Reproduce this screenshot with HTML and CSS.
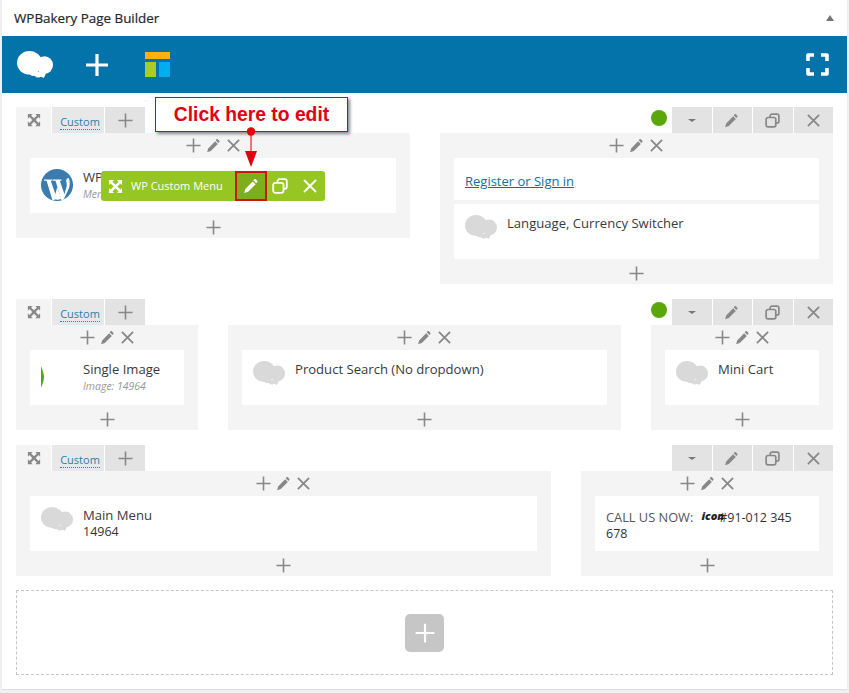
FILE: index.html
```html
<!DOCTYPE html>
<html lang="en">
<head>
<meta charset="utf-8">
<title>WPBakery Page Builder</title>
<link rel="stylesheet" href="styles.css">
</head>
<body>
<svg class="defs" width="0" height="0" aria-hidden="true">
  <symbol id="i-plus" viewBox="0 0 16 16"><path d="M8 .5v15M.5 8h15" fill="none" stroke="currentColor" stroke-width="1.700"/></symbol>
  <symbol id="i-x" viewBox="0 0 16 16"><path d="M2 2l12 12M14 2L2 14" fill="none" stroke="currentColor" stroke-width="1.900"/></symbol>
  <symbol id="i-pen" viewBox="0 0 16 16"><path d="M11.300 1.300c.4-.4 1-.4 1.400 0l1.500 1.500c.4.400.4 1 0 1.400l-1 1-2.900-2.900z" fill="currentColor"/><path d="M9.700 3.400l2.900 2.900-7.500 7.500-3.900 1.300 1.100-4z" fill="currentColor"/></symbol>
  <symbol id="i-copy" viewBox="0 0 16 16"><path d="M5.500 4V3.200a2 2 0 0 1 2-2h5.300a2 2 0 0 1 2 2v5.600a2 2 0 0 1-2 2h-1.300M3.200 4.800h6.300a2 2 0 0 1 2 2v6a2 2 0 0 1-2 2H3.200a2 2 0 0 1-2-2v-6a2 2 0 0 1 2-2z" fill="none" stroke="currentColor" stroke-width="1.800"/></symbol>
  <symbol id="i-expand" viewBox="0 0 16 16"><path d="M1 1h5.500L4.700 2.800 8 6.100l3.300-3.300L9.500 1H15v5.500l-1.800-1.800L9.900 8l3.300 3.300 1.800-1.800V15H9.500l1.800-1.800L8 9.900l-3.300 3.300L6.500 15H1V9.500l1.800 1.800L6.100 8 2.800 4.700 1 6.500z" fill="currentColor"/></symbol>
  <symbol id="i-cloud" viewBox="0 0 36 27"><ellipse cx="12.500" cy="11.800" rx="12.500" ry="11.800" fill="currentColor"/><ellipse cx="27.500" cy="14" rx="8.500" ry="8.800" fill="currentColor"/><path d="M11 21h18l-.8 3.500-1.600 2.500-2.400-1.300-2.200.8-3.300-.300-.4-1.200-3.800-.3-1.300-1z" fill="currentColor"/></symbol>
</svg>

<main class="panel">
  <header class="panel-head">
    <h2 class="panel-title">WPBakery Page Builder</h2>
    <span class="caret-up"></span>
  </header>

  <nav class="toolbar">
    <svg class="tb-logo"><use href="#i-cloud"/></svg>
    <svg class="tb-plus" viewBox="0 0 22 22"><path d="M11 0v22M0 11h22" fill="none" stroke="currentColor" stroke-width="3.200"/></svg>
    <div class="tb-layout"><span class="tb-o"></span><span class="tb-g"></span><span class="tb-b"></span></div>
    <svg class="tb-full" viewBox="0 0 23 23"><path d="M2 8V2h6M15 2h6v6M21 15v6h-6M8 21H2v-6" fill="none" stroke="currentColor" stroke-width="3.600" stroke-linejoin="round"/></svg>
  </nav>

  <div class="rows">
    <section class="row">
      <div class="row-bar">
        <span class="tab tab-move"><svg class="ic-14"><use href="#i-expand"/></svg></span>
        <span class="tab tab-custom"><a class="custom-link">Custom</a></span>
        <span class="tab tab-add"><svg class="ic-15"><use href="#i-plus"/></svg></span>
        <span class="bar-space"></span>
        <span class="status-dot"></span>
        <span class="act"><span class="caret-down"></span></span>
        <span class="act"><svg class="ic-15 ic-shift"><use href="#i-pen"/></svg></span>
        <span class="act"><svg class="ic-15"><use href="#i-copy"/></svg></span>
        <span class="act"><svg class="ic-15"><use href="#i-x"/></svg></span>
      </div>
      <div class="cols cols-66">
        <div class="col">
          <div class="col-ctl"><svg class="ic-15"><use href="#i-plus"/></svg><svg class="ic-15"><use href="#i-pen"/></svg><svg class="ic-15"><use href="#i-x"/></svg></div>
          <div class="card">
            <svg class="wp-logo" viewBox="0 0 32 32"><circle cx="16" cy="16" r="16" fill="#3a7cae"/><path d="M3 10.500h8.500v1.200H9.800L15 27l-2 4.500-1.500-.3L5.600 11.700H3z" fill="#fff"/><path d="M12 10.500h8.500v1.200h-1.700l5 14.500-2 5-1.500-.200-5.800-19.300H12z" fill="#fff"/><path d="M27.700 9c1.500 3.500 1.500 8-.5 12l-4.500 9.500-1-.3 3.500-11c1-3 .5-5 0-7-.3-1.500 1-3 2.500-3.200z" fill="#fff"/><path d="M16.200 18l4 11.500-.1.500c-2.300.8-4.800.9-7.100.2z" fill="#fff"/></svg>
            <div class="card-text"><div class="card-title">WP Custom Menu</div><div class="card-sub">Menu: Main</div></div>
          </div>
          <div class="col-add"><svg class="ic-15"><use href="#i-plus"/></svg></div>
        </div>
        <div class="col">
          <div class="col-ctl"><svg class="ic-15"><use href="#i-plus"/></svg><svg class="ic-15"><use href="#i-pen"/></svg><svg class="ic-15"><use href="#i-x"/></svg></div>
          <div class="card card-link"><a class="reg-link">Register or Sign in</a></div>
          <div class="card card-gap">
            <svg class="ph"><use href="#i-cloud"/></svg>
            <div class="card-text"><div class="card-title">Language, Currency Switcher</div></div>
          </div>
          <div class="col-add"><svg class="ic-15"><use href="#i-plus"/></svg></div>
        </div>
      </div>
    </section>

    <section class="row">
      <div class="row-bar">
        <span class="tab tab-move"><svg class="ic-14"><use href="#i-expand"/></svg></span>
        <span class="tab tab-custom"><a class="custom-link">Custom</a></span>
        <span class="tab tab-add"><svg class="ic-15"><use href="#i-plus"/></svg></span>
        <span class="bar-space"></span>
        <span class="status-dot"></span>
        <span class="act"><span class="caret-down"></span></span>
        <span class="act"><svg class="ic-15 ic-shift"><use href="#i-pen"/></svg></span>
        <span class="act"><svg class="ic-15"><use href="#i-copy"/></svg></span>
        <span class="act"><svg class="ic-15"><use href="#i-x"/></svg></span>
      </div>
      <div class="cols cols-363">
        <div class="col">
          <div class="col-ctl"><svg class="ic-15"><use href="#i-plus"/></svg><svg class="ic-15"><use href="#i-pen"/></svg><svg class="ic-15"><use href="#i-x"/></svg></div>
          <div class="card">
            <svg class="thumb" viewBox="0 0 32 32"><path d="M0 5c1 3 3 7 3 11s-2 8-3 11z" fill="#5aa312"/></svg>
            <div class="card-text"><div class="card-title">Single Image</div><div class="card-sub">Image: 14964</div></div>
          </div>
          <div class="col-add"><svg class="ic-15"><use href="#i-plus"/></svg></div>
        </div>
        <div class="col">
          <div class="col-ctl"><svg class="ic-15"><use href="#i-plus"/></svg><svg class="ic-15"><use href="#i-pen"/></svg><svg class="ic-15"><use href="#i-x"/></svg></div>
          <div class="card">
            <svg class="ph"><use href="#i-cloud"/></svg>
            <div class="card-text"><div class="card-title">Product Search (No dropdown)</div></div>
          </div>
          <div class="col-add"><svg class="ic-15"><use href="#i-plus"/></svg></div>
        </div>
        <div class="col">
          <div class="col-ctl"><svg class="ic-15"><use href="#i-plus"/></svg><svg class="ic-15"><use href="#i-pen"/></svg><svg class="ic-15"><use href="#i-x"/></svg></div>
          <div class="card">
            <svg class="ph"><use href="#i-cloud"/></svg>
            <div class="card-text"><div class="card-title">Mini Cart</div></div>
          </div>
          <div class="col-add"><svg class="ic-15"><use href="#i-plus"/></svg></div>
        </div>
      </div>
    </section>

    <section class="row">
      <div class="row-bar">
        <span class="tab tab-move"><svg class="ic-14"><use href="#i-expand"/></svg></span>
        <span class="tab tab-custom"><a class="custom-link">Custom</a></span>
        <span class="tab tab-add"><svg class="ic-15"><use href="#i-plus"/></svg></span>
        <span class="bar-space"></span>
        <span class="act"><span class="caret-down"></span></span>
        <span class="act"><svg class="ic-15 ic-shift"><use href="#i-pen"/></svg></span>
        <span class="act"><svg class="ic-15"><use href="#i-copy"/></svg></span>
        <span class="act"><svg class="ic-15"><use href="#i-x"/></svg></span>
      </div>
      <div class="cols cols-84">
        <div class="col">
          <div class="col-ctl"><svg class="ic-15"><use href="#i-plus"/></svg><svg class="ic-15"><use href="#i-pen"/></svg><svg class="ic-15"><use href="#i-x"/></svg></div>
          <div class="card">
            <svg class="ph"><use href="#i-cloud"/></svg>
            <div class="card-text"><div class="card-title">Main Menu</div><div class="card-line">14964</div></div>
          </div>
          <div class="col-add"><svg class="ic-15"><use href="#i-plus"/></svg></div>
        </div>
        <div class="col">
          <div class="col-ctl"><svg class="ic-15"><use href="#i-plus"/></svg><svg class="ic-15"><use href="#i-pen"/></svg><svg class="ic-15"><use href="#i-x"/></svg></div>
          <div class="card card-call">
            <p class="call-text"><span class="call-label">CALL US NOW:</span> <span class="call-icon">icon</span>#91-012 345 678</p>
          </div>
          <div class="col-add"><svg class="ic-15"><use href="#i-plus"/></svg></div>
        </div>
      </div>
    </section>

    <div class="add-zone"><span class="add-btn"><svg class="ic-20"><use href="#i-plus"/></svg></span></div>
  </div>

  <div class="green-bar">
    <svg class="gb-move"><use href="#i-expand"/></svg>
    <span class="gb-label">WP Custom Menu</span>
    <span class="gb-edit"><svg class="gb-ic"><use href="#i-pen"/></svg></span>
    <svg class="gb-ic gb-copy"><use href="#i-copy"/></svg>
    <svg class="gb-ic gb-x"><use href="#i-x"/></svg>
  </div>

  <div class="callout">Click here to edit</div>
  <svg class="callout-arrow" viewBox="0 0 16 44"><path d="M8 6v20" stroke="#f2474d" stroke-width="1.500"/><circle cx="8" cy="4.500" r="4.200" fill="#e3000f"/><path d="M2 24h12l-6 16z" fill="#e3000f"/></svg>
</main>
</body>
</html>
```
FILE: styles.css
```css
html, body {
  margin: 0;
  padding: 0;
  background: #f1f1f1;
}

body {
  font-family: "Open Sans", "Noto Sans", sans-serif;
  color: #444;
  font-size: 13px;
  height: 693px;
  overflow: hidden;
}

.defs {
  position: absolute;
}

.panel {
  position: relative;
  width: 845px;
  height: 689px;
  margin-left: 2px;
  background: #fff;
  box-shadow: 0 1px 1px rgba(0, 0, 0, .08);
}

.panel-head {
  height: 36px;
  display: flex;
  align-items: center;
  justify-content: space-between;
  padding: 0 13px 0 12px;
}

.panel-title {
  margin: 0;
  font-size: 13.400px;
  font-weight: 400;
  color: #23282d;
  -webkit-text-stroke: .2px #23282d;
}

.caret-up {
  width: 0;
  height: 0;
  border-left: 4.500px solid transparent;
  border-right: 4.500px solid transparent;
  border-bottom: 6px solid #72777c;
  margin-top: -1px;
}

.toolbar {
  height: 57px;
  background: #0473aa;
  display: flex;
  align-items: center;
  color: #fff;
  padding: 0 17px 0 15px;
}

.tb-logo {
  width: 36px;
  height: 27px;
  margin-top: -1px;
}

.tb-plus {
  width: 22px;
  height: 22px;
  margin-left: 33px;
}

.tb-layout {
  display: grid;
  grid-template-columns: 11px 11px;
  grid-template-rows: 7px 15px;
  column-gap: 3px;
  row-gap: 3px;
  margin-left: 37px;
}

.tb-o { grid-column: 1 / 3; background: #fcb214; }
.tb-g { background: #a8cb2d; }
.tb-b { background: #00aeef; }

.tb-full {
  width: 23px;
  height: 23px;
  margin-left: auto;
  margin-right: 1px;
}

.rows {
  padding: 14px 14px 14px;
}

.row {
  margin-bottom: 15px;
}

.row-bar {
  display: flex;
  height: 26px;
  color: #888;
}

.tab, .act {
  display: flex;
  align-items: center;
  justify-content: center;
  height: 26px;
}

.tab-move {
  width: 35px;
  background: #f4f4f4;
  margin-right: 1px;
}

.tab-custom {
  width: 52px;
  background: #e8e8e8;
  margin-right: 1px;
  padding-left: 4px;
  box-sizing: border-box;
}

.tab-add {
  width: 40px;
  background: #e3e3e3;
}

.bar-space {
  flex: 1;
}

.status-dot {
  width: 16px;
  height: 16px;
  border-radius: 50%;
  background: #5aa70a;
  margin: 3px 4px 0 0;
}

.act {
  width: 39.500px;
  background: #e3e3e3;
  margin-left: 1px;
}

.caret-down {
  width: 0;
  height: 0;
  border-left: 4px solid transparent;
  border-right: 4px solid transparent;
  border-top: 3px solid #777;
}

.custom-link {
  font-size: 11px;
  color: #2a7ea8;
  line-height: 14px;
  border-bottom: 1px dotted #2a7ea8;
  margin-top: 5px;
}

.ic-14 { width: 14px; height: 14px; }
.ic-15 { width: 15px; height: 15px; }
.ic-20 { width: 20px; height: 20px; }
.ic-shift { margin-right: 2px; }

.cols {
  display: grid;
  column-gap: 30px;
  align-items: start;
}

.cols-66  { grid-template-columns: 394px 393px; }
.cols-363 { grid-template-columns: 182px 393px 182px; }
.cols-84  { grid-template-columns: 535px 252px; }

.col {
  background: #f4f4f4;
  padding: 0 14px;
  color: #888;
}

.col-ctl, .col-add {
  height: 25px;
  display: flex;
  align-items: center;
  justify-content: center;
  gap: 5px;
}

.col-add {
  padding-top: 3px;
  box-sizing: border-box;
}

.card {
  background: #fff;
  height: 55px;
  display: flex;
  padding: 11px 11px 0;
  box-sizing: border-box;
  color: #444;
}

.card-link {
  height: 42px;
  padding-top: 15px;
}

.card-gap {
  margin-top: 4px;
}

.reg-link {
  color: #0f6f9f;
  text-decoration: underline;
  line-height: 16px;
}

.wp-logo, .thumb, .ph {
  width: 32px;
  height: 32px;
  flex: none;
  margin-right: 10px;
}

.ph {
  height: 24px;
  color: #d9d9d9;
}

.card-text {
  min-width: 0;
  margin-top: -1px;
}

.card-title {
  font-size: 13.100px;
  line-height: 18px;
  color: #3a3a3a;
  white-space: nowrap;
}

.card-sub {
  font-size: 10.500px;
  font-style: italic;
  color: #999;
  line-height: 16px;
  white-space: nowrap;
}

.card-line {
  line-height: 16px;
  color: #333;
  font-size: 12.500px;
}

.card-call {
  padding: 13px 11px 0;
}

.call-text {
  margin: 0;
  font-size: 12.500px;
  line-height: 16px;
  color: #333;
}

.call-label {
  color: #555;
  font-size: 12.800px;
  margin-right: 5px;
}

.call-icon {
  font-weight: 800;
  font-style: italic;
  font-size: 11px;
  color: #222;
  margin-right: -5px;
  position: relative;
  top: -2px;
}

.add-zone {
  height: 85px;
  box-sizing: border-box;
  border: 1px dashed #c6c6c6;
  display: flex;
  align-items: center;
  justify-content: center;
  margin-top: -1px;
}

.add-btn {
  width: 39px;
  height: 38px;
  border-radius: 5px;
  background: #c6c6c6;
  color: #fff;
  display: flex;
  align-items: center;
  justify-content: center;
}

.green-bar {
  position: absolute;
  left: 99px;
  top: 171px;
  width: 224px;
  height: 30px;
  border-radius: 3px;
  background: #95c623;
  color: #fff;
  display: flex;
  align-items: center;
  padding-left: 7px;
  box-sizing: border-box;
}

.gb-move {
  width: 15px;
  height: 15px;
  flex: none;
}

.gb-label {
  font-size: 11px;
  margin-left: 8px;
  margin-top: -2px;
  width: 104px;
  flex: none;
}

.gb-edit {
  width: 32px;
  height: 30px;
  box-sizing: border-box;
  border: 2px solid #c7170f;
  background: #7fae1c;
  display: flex;
  align-items: center;
  justify-content: center;
  flex: none;
}

.gb-ic {
  width: 16px;
  height: 16px;
  flex: none;
}

.gb-copy {
  margin-left: 5px;
}

.gb-x {
  margin-left: 14px;
}

.callout {
  position: absolute;
  left: 153px;
  top: 97px;
  width: 193px;
  height: 35px;
  box-sizing: border-box;
  border: 1px solid #b5121b;
  background: #fff;
  box-shadow: 2px 2px 3px #888;
  color: #e3000f;
  font: 700 19.300px/33px "Liberation Sans", Arial, sans-serif;
  text-align: center;
}

.callout-arrow {
  position: absolute;
  left: 241px;
  top: 127px;
  width: 16px;
  height: 44px;
}
```
